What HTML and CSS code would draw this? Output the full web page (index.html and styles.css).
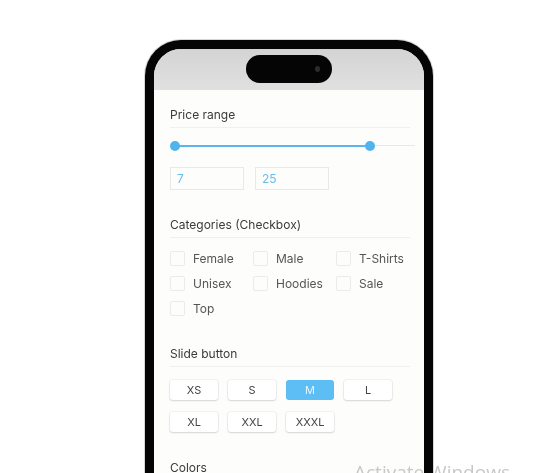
FILE: index.html
```html
<!DOCTYPE html>
<html>
<head>
<meta charset="utf-8">
<link rel="stylesheet" href="styles.css">
</head>
<body>
<div class="stage">
  <div class="phone">
    <div class="status">
      <div class="island"><span class="cam"></span></div>
    </div>
    <div class="content">
      <div class="section-title">Price range</div>
      <div class="slider">
        <div class="track"></div>
        <div class="fill"></div>
        <span class="thumb t1"></span>
        <span class="thumb t2"></span>
      </div>
      <div class="inputs">
        <div class="input">7</div>
        <div class="input">25</div>
      </div>

      <div class="section-title mt">Categories (Checkbox)</div>
      <div class="checks">
        <label class="check"><span class="box"></span>Female</label>
        <label class="check"><span class="box"></span>Male</label>
        <label class="check"><span class="box"></span>T-Shirts</label>
        <label class="check"><span class="box"></span>Unisex</label>
        <label class="check"><span class="box"></span>Hoodies</label>
        <label class="check"><span class="box"></span>Sale</label>
        <label class="check"><span class="box"></span>Top</label>
      </div>

      <div class="section-title mt2">Slide button</div>
      <div class="sizes">
        <div class="size">XS</div>
        <div class="size">S</div>
        <div class="size active">M</div>
        <div class="size">L</div>
        <div class="size">XL</div>
        <div class="size">XXL</div>
        <div class="size">XXXL</div>
      </div>

      <div class="section-title mt3">Colors</div>
    </div>
  </div>
  <div class="watermark">Activate Windows</div>
</div>
</body>
</html>
```
FILE: styles.css
```css
html, body {
  margin: 0;
  padding: 0;
  background: #ffffff;
  overflow: hidden;
}
.stage {
  position: relative;
  width: 559px;
  height: 473px;
  overflow: hidden;
  font-family: Inter, "Noto Sans", sans-serif;
}
.phone {
  position: relative;
  z-index: 2;
  margin: 40px 0 0 145px;
  width: 270px;
  height: 520px;
  border: 9px solid #050505;
  border-bottom: none;
  border-radius: 36px 36px 0 0;
  box-shadow: 0 0 0 1px #d6d6d6;
  background: #fdfdfc;
  overflow: hidden;
}
.status {
  height: 41px;
  background: linear-gradient(#d4d4d4, #e0e0e0);
  display: flex;
  justify-content: center;
  padding-top: 6px;
  box-sizing: border-box;
}
.island {
  width: 86px;
  height: 28px;
  border-radius: 14px;
  background: #050505;
  position: relative;
}
.cam {
  position: absolute;
  right: 12px;
  top: 11px;
  width: 5px;
  height: 6px;
  border-radius: 50%;
  background: #2c2c2c;
}
.content {
  padding: 17px 0 0 16px;
}
.section-title {
  width: 240px;
  font-size: 12px;
  line-height: 16px;
  color: #3a3a3a;
  padding-bottom: 4px;
  border-bottom: 1px solid #f0f0f0;
}
.mt { margin-top: 27px; }
.mt2 { margin-top: 25px; }
.mt3 { margin-top: 28px; }
.slider {
  position: relative;
  margin-top: 13px;
  width: 245px;
  height: 10px;
}
.track {
  position: absolute;
  left: 5px;
  right: 0;
  top: 4px;
  height: 1px;
  background: #e8e8e8;
}
.fill {
  position: absolute;
  left: 5px;
  width: 195px;
  top: 4px;
  height: 2px;
  background: #5ab6ec;
}
.thumb {
  position: absolute;
  top: 0;
  width: 10px;
  height: 10px;
  border-radius: 50%;
  background: #4fb3ee;
}
.t1 { left: 0; }
.t2 { left: 195px; }
.inputs {
  display: flex;
  gap: 11px;
  margin-top: 16px;
}
.input {
  width: 74px;
  height: 23px;
  box-sizing: border-box;
  border: 1px solid #e9e9e9;
  font-size: 12px;
  line-height: 21px;
  padding-left: 6px;
  color: #68bdef;
}
.checks {
  display: grid;
  grid-template-columns: 83px 83px 83px;
  grid-auto-rows: 25px;
  margin-top: 8px;
}
.check {
  display: flex;
  align-items: center;
  font-size: 12px;
  color: #555;
}
.box {
  width: 15px;
  height: 15px;
  box-sizing: border-box;
  border: 1px solid #ebebeb;
  border-radius: 2px;
  margin-right: 8px;
}
.sizes {
  display: grid;
  grid-template-columns: repeat(4, 48px);
  column-gap: 10px;
  row-gap: 12px;
  margin-top: 13px;
}
.size {
  height: 20px;
  border-radius: 3px;
  background: #fff;
  box-shadow: 0 1px 2px rgba(0,0,0,0.12), 0 0 0 1px #f2f2f2;
  font-size: 11px;
  line-height: 20px;
  text-align: center;
  color: #444;
}
.size.active {
  background: #5cbef5;
  color: #e8f5fd;
  box-shadow: none;
}
.watermark {
  position: absolute;
  z-index: 3;
  left: 354px;
  top: 459px;
  font-family: "Open Sans", "Noto Sans", sans-serif;
  font-size: 19px;
  color: #c8c8c8;
  white-space: nowrap;
  mix-blend-mode: darken;
}
```
